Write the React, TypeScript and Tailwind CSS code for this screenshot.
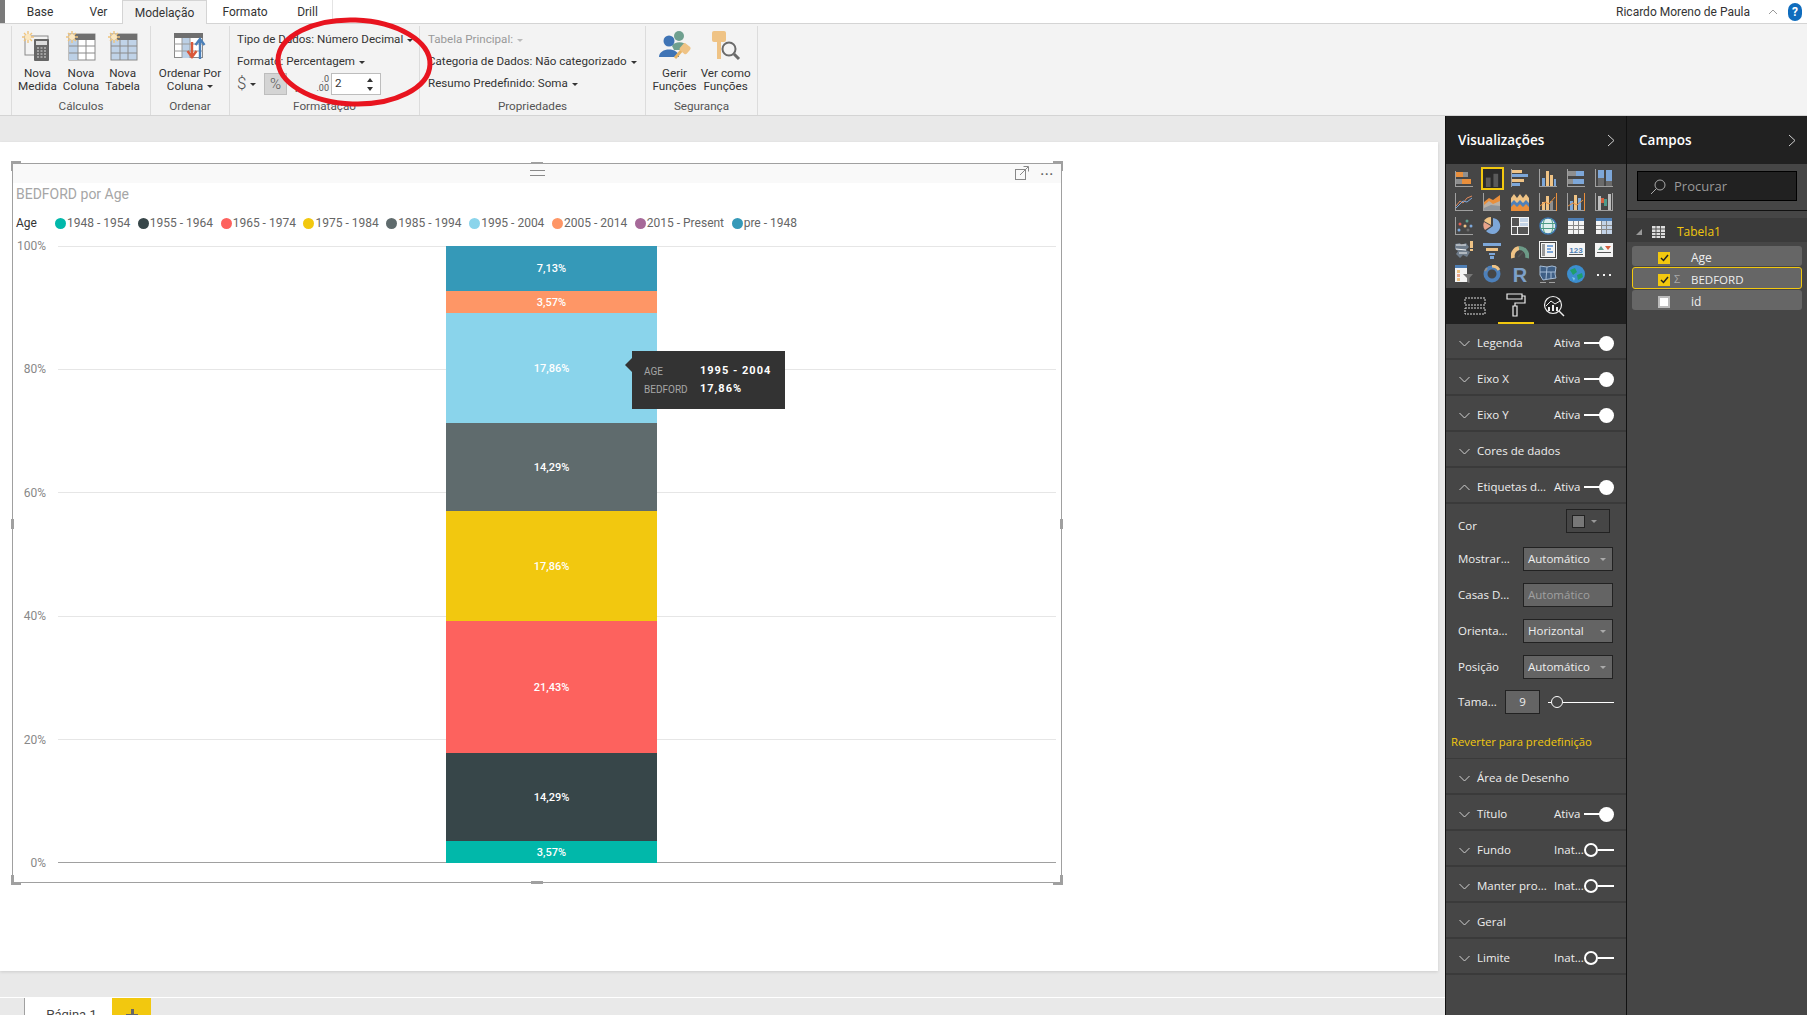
import type { ReactNode } from "react";

const legend = [
  { label: "1948 - 1954", color: "bg-[#01b8aa]" },
  { label: "1955 - 1964", color: "bg-[#374649]" },
  { label: "1965 - 1974", color: "bg-[#fd625e]" },
  { label: "1975 - 1984", color: "bg-[#f2c80f]" },
  { label: "1985 - 1994", color: "bg-[#5f6b6d]" },
  { label: "1995 - 2004", color: "bg-[#8ad4eb]" },
  { label: "2005 - 2014", color: "bg-[#fe9666]" },
  { label: "2015 - Present", color: "bg-[#a66999]" },
  { label: "pre - 1948", color: "bg-[#3599b8]" },
];

const segments = [
  { value: "7,13%", color: "bg-[#3599b8]", h: "h-[45px]" },
  { value: "3,57%", color: "bg-[#fe9666]", h: "h-[22px]" },
  { value: "17,86%", color: "bg-[#8ad4eb]", h: "h-[110px]" },
  { value: "14,29%", color: "bg-[#5f6b6d]", h: "h-[88px]" },
  { value: "17,86%", color: "bg-[#f2c80f]", h: "h-[110px]" },
  { value: "21,43%", color: "bg-[#fd625e]", h: "h-[132px]" },
  { value: "14,29%", color: "bg-[#374649]", h: "h-[88px]" },
  { value: "3,57%", color: "bg-[#01b8aa]", h: "h-[22px]" },
];

const ticks = ["100%", "80%", "60%", "40%", "20%", "0%"];

const G = "#8f8f8f";
const D = "#6a6a6a";
const O = "#e98f3c";
const T = "#efc385";
const B = "#7da7d9";
const A = "#a0a0a0";
const W = "#f4f4f4";

function R(x: number, y: number, w: number, h: number, fill: string) {
  return <rect x={x} y={y} width={w} height={h} fill={fill} />;
}

function Axes() {
  return (
    <>
      {R(0, 0, 1, 18, A)}
      {R(0, 17, 18, 1, A)}
    </>
  );
}

function TableIcon({ head = "#4f7fb5", tint = false }: { head?: string; tint?: boolean }) {
  return (
    <>
      {R(1, 1, 16, 16, W)}
      {R(1, 1, 16, 3, head)}
      {tint && R(7, 4, 10, 13, "#c3d3e6")}
      {R(6, 4, 1, 13, "#888")}
      {R(11, 4, 1, 13, "#888")}
      {R(1, 8, 16, 1, "#888")}
      {R(1, 12, 16, 1, "#888")}
    </>
  );
}

const gallery: ReactNode[] = [
  <>{R(0, 2, 1, 15, A)}{R(0, 17, 18, 1, A)}{R(1, 3, 7, 5, O)}{R(8, 3, 5, 5, G)}{R(1, 10, 6, 5, G)}{R(7, 10, 9, 5, O)}</>,
  <>{R(2, 8, 5, 10, "#5a5a5a")}{R(10, 4, 5, 14, "#5a5a5a")}</>,
  <>{R(0, 0, 1, 18, A)}{R(1, 1, 10, 3, T)}{R(1, 5, 16, 3, B)}{R(1, 10, 12, 3, T)}{R(1, 14, 8, 3, B)}</>,
  <><Axes />{R(3, 9, 3, 8, B)}{R(7, 2, 3, 15, T)}{R(11, 6, 3, 11, T)}{R(15, 10, 2, 7, B)}</>,
  <>{R(0, 0, 1, 18, A)}{R(0, 17, 18, 1, A)}{R(1, 2, 8, 5, G)}{R(9, 2, 8, 5, B)}{R(1, 10, 5, 5, G)}{R(6, 10, 11, 5, B)}</>,
  <><Axes />{R(3, 1, 6, 8, B)}{R(3, 9, 6, 8, D)}{R(11, 1, 6, 11, B)}{R(11, 12, 6, 5, D)}</>,
  <><Axes /><path d="M1 13 L5 8 L8 10 L12 5 L17 3" stroke="#e08a5c" fill="none" /><path d="M1 15 L5 11 L8 8 L12 9 L17 5" stroke={B} fill="none" /></>,
  <><path d="M1 9 L6 5 L10 7 L17 2 V17 H1 Z" fill={O} /><path d="M1 12 L6 8 L10 11 L17 8 V17 H1 Z" fill="#b9b0a6" /><path d="M1 15 L8 12 L17 13 V17 H1 Z" fill="#8f949a" />{R(0, 0, 1, 18, A)}{R(0, 17, 18, 1, A)}</>,
  <><path d="M0 5 L3 1 L6 5 L9 1 L12 5 L15 1 L18 5 V10 H0 Z" fill={T} /><path d="M0 10 L3 7 L6 10 L9 7 L12 10 L15 7 L18 10 V14 H0 Z" fill="#4d80ba" /><path d="M0 14 L3 11 L6 14 L9 11 L12 14 L15 11 L18 14 V18 H0 Z" fill={O} /></>,
  <><Axes />{R(3, 9, 3, 8, T)}{R(7, 3, 3, 14, T)}{R(11, 8, 3, 9, G)}{R(17, 0, 1, 18, O)}<path d="M1 13 L6 9 L10 11 L16 4" stroke={O} fill="none" /></>,
  <><Axes />{R(3, 8, 3, 9, B)}{R(7, 2, 3, 15, T)}{R(11, 5, 3, 12, B)}{R(17, 0, 1, 18, O)}<path d="M1 13 L6 10 L10 12 L16 7" stroke={O} fill="none" /></>,
  <><Axes />{R(3, 3, 3, 14, "#bdbdbd")}{R(6, 5, 3, 5, "#d4603f")}{R(9, 6, 3, 7, "#4d9a8b")}{R(13, 1, 3, 16, "#bdbdbd")}{R(17, 0, 1, 18, A)}</>,
  <><Axes /><circle cx="5" cy="7" r="1.5" fill="#e35d4f" /><circle cx="12" cy="4" r="1.5" fill="#5f9e8f" /><circle cx="10" cy="9" r="1.5" fill={T} /><circle cx="16" cy="9" r="1.5" fill={B} /><circle cx="4" cy="13" r="1.5" fill={B} /><circle cx="13" cy="13" r="1.5" fill={D} /></>,
  <><path d="M10 1 A8 8 0 1 1 3 14 L10 9 Z" fill={B} /><path d="M8 0 V8 L1 4 A8 8 0 0 1 8 0 Z" fill={T} /><path d="M1 5 L8 9 L2 13 A8 8 0 0 1 1 5 Z" fill="#e8a48c" /></>,
  <>{R(0, 0, 18, 18, W)}{R(1, 1, 7, 8, "#555")}{R(9, 1, 8, 4, "#c3d3e6")}{R(9, 6, 8, 3, "#c3d3e6")}{R(1, 10, 5, 7, "#555")}{R(7, 10, 10, 7, "#555")}</>,
  <><circle cx="9" cy="9" r="8" fill="#dff0ee" stroke="#3f78b5" strokeWidth="1.5" /><path d="M1 6.5 H17 M1 11.5 H17 M6 1.5 C3.5 6 3.5 12 6 16.5 M12 1.5 C14.5 6 14.5 12 12 16.5" stroke="#4c9a86" fill="none" /></>,
  <TableIcon />,
  <TableIcon tint />,
  <><path d="M0 3 L5 2 L6 4 L11 2 L14 6 L11 9 L15 11 L12 16 L8 14 L5 17 L1 13 L3 10 L0 8 Z" fill="#6f7c8a" /><path d="M1 4 H11 M1 8 L11 9 M4 12 H12" stroke={W} fill="none" />{R(15, 0, 3, 7, T)}{R(15, 8, 3, 2, T)}</>,
  <>{R(0, 2, 18, 3, B)}{R(3, 7, 12, 3, T)}{R(6, 12, 6, 2, B)}{R(7, 15, 4, 3, B)}</>,
  <><path d="M2 17 A8 8 0 0 1 8 7" stroke={T} strokeWidth="4" fill="none" /><path d="M8 7 A8 8 0 0 1 16 17" stroke="#6c9a87" strokeWidth="4" fill="none" /><path d="M7 16 L12 11" stroke="#555" strokeWidth="1.5" /></>,
  <>{R(0, 0, 18, 18, W)}{R(1, 1, 16, 16, "#444")}{R(2, 2, 14, 14, W)}{R(3, 3, 3, 12, "#999")}{R(8, 4, 6, 2, B)}{R(8, 7, 4, 2, B)}{R(8, 10, 6, 2, B)}</>,
  <>{R(0, 2, 18, 14, W)}<text x="9" y="11.5" textAnchor="middle" fontSize="8" fontWeight="700" fontFamily="'Liberation Sans', sans-serif" fill="#4f7fb5">123</text>{R(2, 13, 14, 1, "#555")}</>,
  <>{R(0, 2, 18, 14, W)}<path d="M3 9 L6 5 L9 9 Z" fill="#5f9e8f" /><path d="M10 5 H16 L13 9 Z" fill="#d4603f" />{R(2, 11, 14, 1, "#555")}</>,
  <>{R(0, 0, 12, 17, W)}{R(0, 0, 12, 3, "#4f7fb5")}{R(2, 5, 3, 3, T)}{R(2, 9, 3, 3, "#e8a48c")}{R(2, 13, 3, 3, T)}<path d="M8 9 H18 L14.5 13 V18 L12 17 V13 Z" fill="#777" /></>,
  <><circle cx="9" cy="9" r="6.5" fill="none" stroke="#4d80ba" strokeWidth="4" /><path d="M9 1 A8 8 0 0 1 16 5" stroke={T} strokeWidth="3" fill="none" /><path d="M2 6 L4 3" stroke={G} strokeWidth="2" /></>,
  <text x="9" y="17" textAnchor="middle" fontSize="20" fontWeight="700" fontFamily="'Liberation Sans', sans-serif" fill="#7da0c8">R</text>,
  <><path d="M1 1 L8 2 L13 1 L17 2 L16 9 L17 13 L10 14 L4 15 L1 10 Z" fill="#3f5f85" stroke="#a5bcd6" /><path d="M1 7 H16 M8 2 L7 14 M12 7 L12 14" stroke="#a5bcd6" fill="none" />{R(1, 17, 6, 1, A)}{R(10, 17, 6, 1, A)}</>,
  <><circle cx="9" cy="9" r="9" fill="#3c8ecf" /><path d="M3 5 L8 3 L10 7 L6 10 Z M10 10 L15 8 L16 12 L11 15 Z" fill="#1f9e6b" /><path d="M5 12 L8 13 L7 16 Z" fill="#7cc8e8" /></>,
  <>{R(2, 9, 2, 2, W)}{R(8, 9, 2, 2, W)}{R(14, 9, 2, 2, W)}</>,
];

function Caret({ color = "border-t-[#333]" }: { color?: string }) {
  return <span className={`inline-block ml-[4px] align-middle w-0 h-0 border-x-[3px] border-x-transparent border-t-[3px] ${color}`} />;
}

function Chevron({ up = false }: { up?: boolean }) {
  return (
    <svg width="11" height="7" viewBox="0 0 11 7" className="shrink-0">
      <path d={up ? "M0.5 6 L5.5 1 L10.5 6" : "M0.5 1 L5.5 6 L10.5 1"} stroke="#d0d0d0" fill="none" />
    </svg>
  );
}

function Toggle({ on }: { on: boolean }) {
  if (on) {
    return (
      <div className="flex items-center w-[30px]">
        <div className="w-[16px] h-[2px] bg-white" />
        <div className="w-[15px] h-[15px] rounded-full bg-white -ml-[1px]" />
      </div>
    );
  }
  return (
    <div className="flex items-center w-[30px]">
      <div className="w-[14px] h-[14px] rounded-full border-2 border-white" />
      <div className="w-[16px] h-[2px] bg-white" />
    </div>
  );
}

function SectionRow({ label, state, up }: { label: string; state?: string; up?: boolean }) {
  return (
    <div className="h-[36px] shrink-0 flex items-center pl-[13px] pt-[4px] border-b-2 border-[#3a3a3a] text-[#eee] text-[11.5px]">
      <Chevron up={up} />
      <span className="ml-[7px] w-[77px] whitespace-nowrap">{label}</span>
      {state && <span className="w-[30px] whitespace-nowrap">{state}</span>}
      {state && <Toggle on={state === "Ativa"} />}
    </div>
  );
}

function SelectBox({ text, disabled }: { text: string; disabled?: boolean }) {
  return (
    <div className={`w-[90px] h-[24px] border border-[#222] bg-[#646464] flex items-center pl-[4px] text-[11.5px] ${disabled ? "text-[#a0a0a0]" : "text-[#eee]"}`}>
      <span className="flex-1">{text}</span>
      {!disabled && <Caret color="border-t-[#aaa] mr-[6px]" />}
    </div>
  );
}

function FormRow({ label, labelClass = "", children }: { label: string; labelClass?: string; children: ReactNode }) {
  return (
    <div className="h-[36px] flex items-center pl-[12px] pt-[2px] text-[#eee] text-[11.5px]">
      <span className={`w-[65px] whitespace-nowrap ${labelClass}`}>{label}</span>
      {children}
    </div>
  );
}

function Sun({ x, y }: { x: number; y: number }) {
  return (
    <g transform={`translate(${x} ${y})`}>
      <path d="M6 0 V12 M0 6 H12 M2 2 L10 10 M10 2 L2 10" stroke="#f0c47c" strokeWidth="1.4" />
      <circle cx="6" cy="6" r="3" fill="#fbe7c0" />
    </g>
  );
}

function SmallTable({ tintAll }: { tintAll?: boolean }) {
  return (
    <svg width="30" height="30" viewBox="0 0 30 30">
      <rect x="3" y="3" width="26" height="26" fill={tintAll ? "#c0d3e8" : "#fff"} stroke="#8a8a8a" />
      <rect x="3" y="3" width="26" height="6" fill="#6f6f6f" />
      {!tintAll && <rect x="3" y="9" width="9" height="20" fill="#bcd0e6" />}
      <path d="M12 9 V29 M20 9 V29 M3 15 H29 M3 22 H29" stroke="#8a8a8a" />
      <Sun x={0} y={0} />
    </svg>
  );
}

function RibbonButton({ icon, lines, caret }: { icon: ReactNode; lines: string[]; caret?: boolean }) {
  return (
    <div className="flex flex-col items-center pt-[3px] text-[11.7px] leading-[13px] text-[#333] whitespace-nowrap">
      <div className="h-[34px] flex items-center justify-center">{icon}</div>
      <div className="mt-[4px] text-center">{lines[0]}</div>
      <div className="text-center">
        {lines[1]}
        {caret && <Caret />}
      </div>
    </div>
  );
}

function RibbonGroup({ width, label, children, className = "" }: { width: string; label: string; children: ReactNode; className?: string }) {
  return (
    <div className={`${width} shrink-0 h-full border-r border-[#dcdcdc] flex flex-col`}>
      <div className={`h-[68px] shrink-0 ${className}`}>{children}</div>
      <div className="h-[20px] pt-[3px] text-center text-[11.7px] text-[#555] leading-[18px]">{label}</div>
    </div>
  );
}

function Handle({ className }: { className: string }) {
  return <div className={`absolute bg-[#a0a0a0] ${className}`} />;
}

export default function App() {
  return (
    <div className="relative w-[1807px] h-[1015px] overflow-hidden flex flex-col bg-[#e9e9e9] font-['Roboto',sans-serif]">
      {/* tab strip */}
      <div className="h-[24px] bg-white border-b border-[#d4d4d4] flex items-stretch shrink-0 text-[12px] text-[#333]">
        <div className="w-[5px] bg-[#7a7a7a] h-[23px]" />
        <div className="w-[70px] flex items-center justify-center">Base</div>
        <div className="w-[47px] flex items-center justify-center">Ver</div>
        <div className="w-[85px] h-[24px] flex items-center justify-center bg-[#f3f3f3] border-x border-t border-[#d4d4d4]">Modelação</div>
        <div className="w-[76px] flex items-center justify-center">Formato</div>
        <div className="w-[50px] flex items-center justify-center border-r border-[#e4e4e4]">Drill</div>
        <div className="flex-1 flex items-center justify-end pr-[5px]">
          <span>Ricardo Moreno de Paula</span>
          <svg width="10" height="6" viewBox="0 0 10 6" className="ml-[18px]">
            <path d="M1 5 L5 1 L9 5" stroke="#9a9a9a" fill="none" />
          </svg>
          <div className="ml-[10px] w-[14px] h-[18px] rounded-full bg-[#0f6cbd] text-white text-[12px] font-bold flex items-center justify-center">?</div>
        </div>
      </div>

      {/* ribbon */}
      <div className="h-[92px] bg-[#f3f3f3] border-b border-[#d4d4d4] flex shrink-0 pt-[2px] box-border">
        <div className="w-[12px] h-full border-r border-[#dcdcdc]" />
        <RibbonGroup width="w-[139px]" label="Cálculos" className="flex justify-around pl-[3px] pr-[7px]">
          <RibbonButton
            lines={["Nova", "Medida"]}
            icon={
              <svg width="30" height="30" viewBox="0 0 30 30">
                <rect x="3" y="5" width="23" height="19" fill="none" stroke="#8a8a8a" />
                <rect x="12" y="8" width="15" height="22" rx="1" fill="#666" />
                <rect x="14" y="10" width="11" height="4" fill="#dcdcdc" />
                <path d="M15 17 H25 M15 20 H25 M15 23 H25 M15 26 H25" stroke="#dcdcdc" strokeDasharray="2 1.5" />
                <Sun x={0} y={0} />
              </svg>
            }
          />
          <RibbonButton lines={["Nova", "Coluna"]} icon={<SmallTable />} />
          <RibbonButton lines={["Nova", "Tabela"]} icon={<SmallTable tintAll />} />
        </RibbonGroup>
        <RibbonGroup width="w-[79px]" label="Ordenar" className="flex justify-center">
          <RibbonButton
            lines={["Ordenar Por", "Coluna"]}
            caret
            icon={
              <svg width="32" height="30" viewBox="0 0 32 30">
                <rect x="0.5" y="2.5" width="28" height="24" fill="#fff" stroke="#8a8a8a" />
                <rect x="0" y="2" width="29" height="5" fill="#6f6f6f" />
                <rect x="8" y="7" width="8" height="20" fill="#bcd0e6" />
                <path d="M8 7 V27 M16 7 V27 M0 13 H29 M0 20 H29" stroke="#9a9a9a" />
                <path d="M18 11 V24 M13.5 20 L18 26 L22.5 20" stroke="#d9583a" strokeWidth="2.4" fill="none" />
                <path d="M26 28 V10 M21.5 14 L26 8 L30.5 14" stroke="#4b7fb8" strokeWidth="2.4" fill="none" />
              </svg>
            }
          />
        </RibbonGroup>
        <RibbonGroup width="w-[190px]" label="Formatação" className="pl-[7px] pt-[3px] text-[11.6px] text-[#333]">
          <div className="h-[22px] flex items-center whitespace-nowrap">Tipo de Dados: Número Decimal<Caret /></div>
          <div className="h-[22px] flex items-center whitespace-nowrap">Formato: Percentagem<Caret /></div>
          <div className="h-[22px] flex items-center">
            <span className="w-[24px] text-[17px] font-light text-[#555] flex items-center">$<Caret /></span>
            <span className="ml-[3px] w-[23px] h-[22px] bg-[#d4d4d4] border border-[#bdbdbd] flex items-center justify-center text-[15px] font-light text-[#555]">%</span>
            <span className="ml-[8px] w-[10px] text-[17px] font-bold text-[#444]">,</span>
            <span className="w-[26px] text-[9px] leading-[9px] text-[#555] text-right pr-[2px]">.0<br />.00</span>
            <div className="w-[50px] h-[22px] bg-white border border-[#bdbdbd] flex items-center pl-[3px]">
              <span className="flex-1">2</span>
              <div className="flex flex-col gap-[5px] pr-[7px]">
                <span className="w-0 h-0 border-x-[3px] border-x-transparent border-b-[4px] border-b-[#333]" />
                <span className="w-0 h-0 border-x-[3px] border-x-transparent border-t-[4px] border-t-[#333]" />
              </div>
            </div>
          </div>
        </RibbonGroup>
        <RibbonGroup width="w-[226px]" label="Propriedades" className="pl-[8px] pt-[3px] text-[11.6px] text-[#333]">
          <div className="h-[22px] flex items-center whitespace-nowrap text-[#999]">Tabela Principal:<Caret color="border-t-[#bbb]" /></div>
          <div className="h-[22px] flex items-center whitespace-nowrap">Categoria de Dados: Não categorizado<Caret /></div>
          <div className="h-[22px] flex items-center whitespace-nowrap">Resumo Predefinido: Soma<Caret /></div>
        </RibbonGroup>
        <RibbonGroup width="w-[112px]" label="Segurança" className="flex justify-center gap-[4px]">
          <RibbonButton
            lines={["Gerir", "Funções"]}
            icon={
              <svg width="34" height="32" viewBox="0 0 34 32">
                <circle cx="21" cy="6" r="5" fill="#6fa08f" />
                <path d="M14 16 C16 11 27 11 29 16 L27 20 H16 Z" fill="#6fa08f" />
                <circle cx="11" cy="11" r="5.5" fill="#3f74b5" />
                <path d="M1 27 C1 17 21 17 21 27 Z" fill="#3f74b5" />
                <path d="M17 28 L24 20" stroke="#e8b566" strokeWidth="3" />
                <rect x="23" y="14" width="9" height="9" rx="2" transform="rotate(40 27 18)" fill="#efc385" />
              </svg>
            }
          />
          <RibbonButton
            lines={["Ver como", "Funções"]}
            icon={
              <svg width="30" height="32" viewBox="0 0 30 32">
                <rect x="1" y="1" width="14" height="11" rx="2" fill="#efc385" />
                <rect x="6" y="11" width="4" height="18" fill="#efc385" />
                <circle cx="18" cy="19" r="6.5" fill="#f3f3f3" stroke="#6a6a6a" strokeWidth="2" />
                <path d="M23 24 L28 29" stroke="#6a6a6a" strokeWidth="3" />
              </svg>
            }
          />
        </RibbonGroup>
      </div>

      <div className="flex-1 flex min-h-0">
        {/* report canvas */}
        <div className="w-[1445px] shrink-0 flex flex-col pt-[26px]">
          <div className="w-[1438px] h-[830px] bg-white shadow-[0_1px_3px_rgba(0,0,0,0.12)] pt-[21px] pl-[12px]">
            <div className="relative w-[1050px] h-[720px] border border-[#a0a0a0] text-[#777]">
              <Handle className="-left-[2px] -top-[3px] w-[10px] h-[3px]" />
              <Handle className="-left-[2px] -top-[3px] w-[3px] h-[10px]" />
              <Handle className="-right-[2px] -top-[3px] w-[10px] h-[3px]" />
              <Handle className="-right-[2px] -top-[3px] w-[3px] h-[10px]" />
              <Handle className="-left-[2px] -bottom-[3px] w-[10px] h-[3px]" />
              <Handle className="-left-[2px] -bottom-[3px] w-[3px] h-[10px]" />
              <Handle className="-right-[2px] -bottom-[3px] w-[10px] h-[3px]" />
              <Handle className="-right-[2px] -bottom-[3px] w-[3px] h-[10px]" />
              <Handle className="left-[518px] -top-[2px] w-[12px] h-[3px]" />
              <Handle className="left-[518px] -bottom-[2px] w-[12px] h-[3px]" />
              <Handle className="-left-[2px] top-[355px] w-[3px] h-[10px]" />
              <Handle className="-right-[2px] top-[355px] w-[3px] h-[10px]" />

              <div className="h-[19px] bg-[#f9f9f9] relative flex items-center justify-center">
                <div className="w-[15px] h-[6px] -mt-[2px] border-y border-[#8a8a8a]" />
                <svg width="14" height="14" viewBox="0 0 14 14" className="absolute right-[32px] top-[2px]">
                  <rect x="0.5" y="3.5" width="10" height="10" fill="none" stroke="#888" />
                  <path d="M5 9 L13 1 M8.5 0.5 H13.5 V5.5" stroke="#888" fill="none" />
                </svg>
                <div className="absolute right-[7px] top-[3px] text-[12px] leading-[8px] tracking-[1px] text-[#666] font-bold">...</div>
              </div>

              <div className="pl-[3px] h-[21px] mt-[1px] flex items-center text-[14px] text-[#a6a6a6]">BEDFORD por Age</div>
              <div className="pl-[3px] mt-[8px] h-[20px] flex items-center text-[12px] text-[#666] whitespace-nowrap">
                <span className="w-[39px] text-[#333]">Age</span>
                {legend.map((l) => (
                  <span key={l.label} className="flex items-center mr-[7.6px]">
                    <span className={`w-[11px] h-[11px] rounded-full mr-[1px] ${l.color}`} />
                    {l.label}
                  </span>
                ))}
              </div>

              {/* plot */}
              <div className="relative mt-[13px] h-[617px]">
                <div className="absolute inset-0 flex flex-col justify-between">
                  {ticks.map((t) => (
                    <div key={t} className="h-0 flex items-center">
                      <span className="w-[33px] text-right text-[12px] text-[#888]">{t}</span>
                      <span className={`ml-[12px] w-[998px] h-px ${t === "0%" ? "bg-[#a0a0a0]" : "bg-[#e6e6e6]"}`} />
                    </div>
                  ))}
                </div>
                <div className="absolute left-[433px] top-0 w-[211px] flex flex-col text-white text-[11px] font-medium">
                  {segments.map((s, i) => (
                    <div key={i} className={`${s.h} ${s.color} pt-[2px] flex items-center justify-center`}>{s.value}</div>
                  ))}
                </div>
                {/* tooltip */}
                <div className="absolute left-[619px] top-[105px] w-[153px] h-[58px] bg-[#333] text-[11px] flex flex-col justify-center pl-[12px] pt-[1px] gap-[4px]">
                  <div className="absolute -left-[7px] top-[7px] w-0 h-0 border-y-[7px] border-y-transparent border-r-[7px] border-r-[#333]" />
                  <div className="flex items-center h-[14px]">
                    <span className="w-[56px] text-[10px] text-[#a6a6a6]">AGE</span>
                    <span className="text-white font-bold tracking-[1px]">1995 - 2004</span>
                  </div>
                  <div className="flex items-center h-[14px]">
                    <span className="w-[56px] text-[10px] text-[#a6a6a6]">BEDFORD</span>
                    <span className="text-white font-bold tracking-[1px]">17,86%</span>
                  </div>
                </div>
              </div>
            </div>
          </div>

          {/* page tabs */}
          <div className="mt-[26px] border-t border-white flex h-[18px] shrink-0">
            <div className="w-[25px] border-r border-[#a0a0a0]" />
            <div className="w-[87px] bg-white text-[13px] text-[#444] text-center pl-[6px] pt-[9px] overflow-hidden leading-[16px]">Página 1</div>
            <div className="w-[39px] bg-[#f2c80f] flex justify-center pt-[11px] overflow-hidden">
              <div className="relative w-[12px] h-[12px]">
                <div className="absolute left-[5px] top-0 w-[3px] h-[12px] bg-[#666]" />
                <div className="absolute left-0 top-[5px] w-[12px] h-[3px] bg-[#666]" />
              </div>
            </div>
          </div>
        </div>

        {/* visualizations pane */}
        <div className="w-[182px] shrink-0 bg-[#464646] border-x border-[#111] flex flex-col font-['Open_Sans',sans-serif]">
          <div className="h-[48px] shrink-0 bg-[#212121] flex items-center justify-between pl-[12px] pr-[11px] pt-[1px] text-white text-[13.5px] font-semibold">
            <span>Visualizações</span>
            <svg width="8" height="13" viewBox="0 0 8 13"><path d="M1 1 L7 6.5 L1 12" stroke="#d0d0d0" fill="none" /></svg>
          </div>
          <div className="h-[124px] shrink-0 pl-[4px] pt-[2px] grid grid-cols-[repeat(6,28px)] grid-rows-[repeat(5,24px)]">
            {gallery.map((g, i) => (
              <div key={i} className="flex items-center justify-center">
                <div className={i === 1 ? "w-[23px] h-[23px] bg-[#2b2b2b] border-2 border-[#f2c80f] flex items-center justify-center" : "flex"}>
                  <svg width={i === 1 ? 17 : 18} height={i === 1 ? 17 : 18} viewBox="0 0 18 18">{g}</svg>
                </div>
              </div>
            ))}
          </div>
          <div className="h-[36px] shrink-0 bg-[#212121] flex pl-[11px]">
            <div className="w-[36px] flex items-center justify-center">
              <svg width="22" height="18" viewBox="0 0 22 18"><path d="M1 1 H21 V8 H1 Z M1 11 H21 V17 H1 Z" stroke="#ddd" strokeDasharray="2 1" fill="none" /></svg>
            </div>
            <div className="ml-[5px] w-[36px] flex items-center justify-center border-b-2 border-[#f2c80f]">
              <svg width="20" height="24" viewBox="0 0 20 24"><path d="M1 1 H16 V6 H1 Z M16 3 H19 V10 H9 V13 M7 13 H11 V23 H7 Z" stroke="#eee" fill="none" strokeWidth="1.2" /></svg>
            </div>
            <div className="w-[40px] flex items-center justify-center">
              <svg width="22" height="22" viewBox="0 0 22 22">
                <circle cx="10" cy="10" r="8.5" stroke="#eee" fill="none" strokeWidth="1.2" />
                <path d="M16 16 L21 21" stroke="#eee" strokeWidth="1.4" />
                <path d="M3 11 L8 6 L12 9 L17 6" stroke="#eee" fill="none" />
                <path d="M6 16 V12 M10 16 V10 M14 16 V12" stroke="#eee" strokeWidth="2" />
              </svg>
            </div>
          </div>
          <SectionRow label="Legenda" state="Ativa" />
          <SectionRow label="Eixo X" state="Ativa" />
          <SectionRow label="Eixo Y" state="Ativa" />
          <SectionRow label="Cores de dados" />
          <SectionRow label="Etiquetas d..." state="Ativa" up />
          <div className="h-[255px] shrink-0 border-b border-[#3a3a3a] flex flex-col">
            <FormRow label="Cor" labelClass="mt-[6px]">
              <div className="ml-[43px] -mt-[4px] w-[44px] h-[24px] border border-[#222] flex items-center pl-[5px]">
                <span className="w-[13px] h-[13px] bg-[#777] border border-[#222]" />
                <Caret color="border-t-[#999] ml-[6px]" />
              </div>
            </FormRow>
            <FormRow label="Mostrar..."><SelectBox text="Automático" /></FormRow>
            <FormRow label="Casas D..."><SelectBox text="Automático" disabled /></FormRow>
            <FormRow label="Orienta..."><SelectBox text="Horizontal" /></FormRow>
            <FormRow label="Posição"><SelectBox text="Automático" /></FormRow>
            <div className="h-[36px] flex items-center pl-[12px] text-[#eee] text-[11.5px]">
              <span className="w-[47px]">Tama...</span>
              <div className="w-[35px] h-[24px] bg-[#646464] border border-[#222] flex items-center justify-center">9</div>
              <div className="ml-[8px] flex items-center w-[66px]">
                <div className="w-[3px] h-px bg-white" />
                <div className="w-[12px] h-[12px] rounded-full border border-white" />
                <div className="flex-1 h-px bg-white" />
              </div>
            </div>
            <div className="pl-[5px] mt-[14px] text-[11.3px] text-[#f2c80f]">Reverter para predefinição</div>
          </div>
          <SectionRow label="Área de Desenho" />
          <SectionRow label="Título" state="Ativa" />
          <SectionRow label="Fundo" state="Inat..." />
          <SectionRow label="Manter pro..." state="Inat..." />
          <SectionRow label="Geral" />
          <SectionRow label="Limite" state="Inat..." />
        </div>

        {/* fields pane */}
        <div className="flex-1 bg-[#464646] flex flex-col font-['Open_Sans',sans-serif]">
          <div className="h-[48px] shrink-0 bg-[#212121] flex items-center justify-between pl-[12px] pr-[11px] pt-[1px] text-white text-[13.5px] font-semibold">
            <span>Campos</span>
            <svg width="8" height="13" viewBox="0 0 8 13"><path d="M1 1 L7 6.5 L1 12" stroke="#d0d0d0" fill="none" /></svg>
          </div>
          <div className="h-[47px] shrink-0 border-b border-[#111] pl-[10px] pr-[10px] pt-[7px]">
            <div className="h-[30px] bg-[#212121] border border-black flex items-center pl-[12px] pt-[1px] text-[13px] text-[#999]">
              <svg width="16" height="16" viewBox="0 0 16 16"><circle cx="10" cy="6" r="5" fill="none" stroke="#aaa" /><path d="M6.5 9.5 L1 15" stroke="#aaa" /></svg>
              <span className="ml-[8px]">Procurar</span>
            </div>
          </div>
          <div className="mt-[7px] h-[24px] bg-[#3b3b3b] flex items-center pl-[9px] pt-[3px] text-[12px] text-[#f2c80f]">
            <span className="w-0 h-0 border-l-[6px] border-l-transparent border-b-[6px] border-b-[#999]" />
            <svg width="13" height="12" viewBox="0 0 13 12" className="ml-[10px]">
              <rect width="13" height="12" fill="#ddd" />
              <path d="M0 3 H13 M0 6.5 H13 M0 9.5 H13 M4 0 V12 M8.5 0 V12" stroke="#555" />
            </svg>
            <span className="ml-[12px]">Tabela1</span>
          </div>
          <div className="mt-[4px] mx-[5px] flex flex-col gap-[1px] text-[12px] text-[#eee]">
            <div className="h-[20px] bg-[#666] rounded-[3px] flex items-center pl-[26px] pt-[3px]">
              <span className="w-[12px] h-[12px] bg-[#f2c80f] flex items-center justify-center">
                <svg width="9" height="8" viewBox="0 0 9 8"><path d="M1 4 L3.5 6.5 L8 1" stroke="#222" strokeWidth="1.5" fill="none" /></svg>
              </span>
              <span className="ml-[21px]">Age</span>
            </div>
            <div className="h-[22px] bg-[#666] rounded-[3px] border border-[#f2c80f] flex items-center pl-[25px] pt-[3px]">
              <span className="w-[12px] h-[12px] bg-[#f2c80f] flex items-center justify-center">
                <svg width="9" height="8" viewBox="0 0 9 8"><path d="M1 4 L3.5 6.5 L8 1" stroke="#222" strokeWidth="1.5" fill="none" /></svg>
              </span>
              <span className="ml-[4px] w-[11px] text-[#aaa] text-[11px]">Σ</span>
              <span className="ml-[6px] text-[11.5px]">BEDFORD</span>
            </div>
            <div className="h-[20px] bg-[#666] rounded-[3px] flex items-center pl-[26px] pt-[3px]">
              <span className="w-[12px] h-[12px] bg-white border-2 border-[#bbb]" />
              <span className="ml-[21px]">id</span>
            </div>
          </div>
        </div>
      </div>

      {/* hand drawn annotation over the ribbon */}
      <svg width="170" height="100" viewBox="0 0 170 100" className="absolute left-[270px] top-[13px] pointer-events-none">
        <ellipse cx="84" cy="49" rx="76" ry="42" transform="rotate(2 84 49)" fill="none" stroke="#e8141f" strokeWidth="5" />
      </svg>
    </div>
  );
}
